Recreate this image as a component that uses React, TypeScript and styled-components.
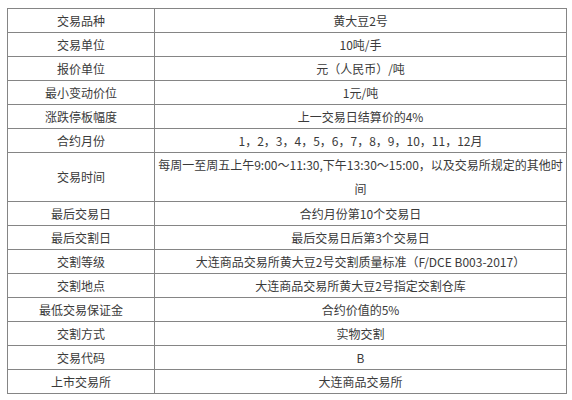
import React from "react";
import styled, { createGlobalStyle } from "styled-components";

const GlobalStyle = createGlobalStyle`
  html, body {
    margin: 0;
    padding: 0;
    background: #ffffff;
  }
  body {
    font-family: "Noto Sans CJK SC", "Noto Sans", sans-serif;
  }
`;

const Page = styled.div`
  width: 572px;
  height: 400px;
  box-sizing: border-box;
  padding: 8px 0 0 7px;
  background: #ffffff;
`;

const Table = styled.table`
  width: 559px;
  border-collapse: collapse;
  table-layout: fixed;
  border: 1px solid #858585;
`;

const LabelCol = styled.col`
  width: 147px;
`;

const ValueCol = styled.col`
  width: 412px;
`;

const Cell = styled.td<{ $tall?: boolean }>`
  border: 1px solid #858585;
  padding: 0 2px;
  height: ${(p) => (p.$tall ? 47 : 23)}px;
  line-height: ${(p) => (p.$tall ? "24px" : "23px")};
  text-align: center;
  vertical-align: middle;
  font-size: 12px;
  color: #3a3a3a;
  white-space: nowrap;
  overflow: hidden;
`;

const rows: { label: string; value: React.ReactNode; tall?: boolean }[] = [
  { label: "交易品种", value: "黄大豆2号" },
  { label: "交易单位", value: "10吨/手" },
  { label: "报价单位", value: "元（人民币）/吨" },
  { label: "最小变动价位", value: "1元/吨" },
  { label: "涨跌停板幅度", value: "上一交易日结算价的4%" },
  { label: "合约月份", value: "1，2，3，4，5，6，7，8，9，10，11，12月" },
  {
    label: "交易时间",
    value: (
      <>
        每周一至周五上午9:00～11:30,下午13:30～15:00，以及交易所规定的其他时
        <br />
        间
      </>
    ),
    tall: true,
  },
  { label: "最后交易日", value: "合约月份第10个交易日" },
  { label: "最后交割日", value: "最后交易日后第3个交易日" },
  { label: "交割等级", value: "大连商品交易所黄大豆2号交割质量标准（F/DCE B003-2017）" },
  { label: "交割地点", value: "大连商品交易所黄大豆2号指定交割仓库" },
  { label: "最低交易保证金", value: "合约价值的5%" },
  { label: "交割方式", value: "实物交割" },
  { label: "交易代码", value: "B" },
  { label: "上市交易所", value: "大连商品交易所" },
];

export default function App() {
  return (
    <>
      <GlobalStyle />
      <Page>
        <Table>
          <colgroup>
            <LabelCol />
            <ValueCol />
          </colgroup>
          <tbody>
            {rows.map((r) => (
              <tr key={r.label}>
                <Cell $tall={r.tall}>{r.label}</Cell>
                <Cell $tall={r.tall}>{r.value}</Cell>
              </tr>
            ))}
          </tbody>
        </Table>
      </Page>
    </>
  );
}
